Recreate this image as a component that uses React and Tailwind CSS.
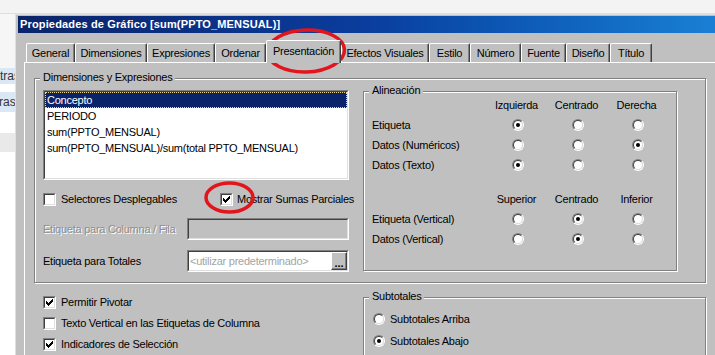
import React from "react";

const tabs = [
  { label: "General", w: "w-[49px]" },
  { label: "Dimensiones", w: "w-[72px]" },
  { label: "Expresiones", w: "w-[68px]" },
  { label: "Ordenar", w: "w-[51px]" },
  { label: "Presentación", w: "w-[75px]", active: true },
  { label: "Efectos Visuales", w: "w-[88px]" },
  { label: "Estilo", w: "w-[41px]" },
  { label: "Número", w: "w-[51px]" },
  { label: "Fuente", w: "w-[45px]" },
  { label: "Diseño", w: "w-[44px]" },
  { label: "Título", w: "w-[42px]" },
];

function Check({ checked }) {
  return (
    <span className="inline-block w-[13px] h-[13px] shrink-0 border border-t-[#808080] border-l-[#808080] border-b-white border-r-white">
      <span className="block w-full h-full border border-t-[#404040] border-l-[#404040] border-b-[#dfdfdf] border-r-[#dfdfdf] bg-white">
        {checked && (
          <svg width="9" height="9" viewBox="0 0 9 9" className="block" shapeRendering="crispEdges">
            <path
              d="M1 3h1v3H1z M2 4h1v3H2z M3 5h1v3H3z M4 4h1v3H4z M5 3h1v3H5z M6 2h1v3H6z M7 1h1v3H7z"
              fill="#000"
            />
          </svg>
        )}
      </span>
    </span>
  );
}

function Radio({ on }) {
  return (
    <span className="inline-flex w-[12px] h-[12px] shrink-0 rounded-full border border-t-[#808080] border-l-[#808080] border-b-white border-r-white">
      <span className="flex items-center justify-center w-full h-full rounded-full border border-t-[#404040] border-l-[#404040] border-b-[#dfdfdf] border-r-[#dfdfdf] bg-white">
        {on && <span className="block w-[4px] h-[4px] rounded-full bg-black" />}
      </span>
    </span>
  );
}

function Sunken({ className, children }) {
  return (
    <div className={"border border-t-[#808080] border-l-[#808080] border-b-white border-r-white " + className}>
      <div className="w-full h-full border border-t-[#404040] border-l-[#404040] border-b-[#dfdfdf] border-r-[#dfdfdf] bg-inherit">
        {children}
      </div>
    </div>
  );
}

function Group({ label, className, children }) {
  return (
    <div className={"relative border border-[#808080] shadow-[inset_1px_1px_0_#fff,1px_1px_0_#fff] " + className}>
      <span className="absolute left-[5px] top-[-8px] px-[3px] bg-[#c0c0c0] leading-[13px]">{label}</span>
      {children}
    </div>
  );
}

function RadioCell({ on }) {
  return (
    <div className="flex justify-center items-center">
      <Radio on={on} />
    </div>
  );
}

export default function App() {
  return (
    <div className="relative w-[715px] h-[355px] overflow-hidden bg-[#f4f4f4] flex flex-col font-['Liberation_Sans',Arial,sans-serif] text-[11px] tracking-[-0.25px] text-black">
      <div className="h-[14px] shrink-0 border-b border-[#dedede] bg-[#f3f3f3]" />
      <div className="flex flex-1 min-h-0">
        {/* left strip of the window behind */}
        <div className="w-[15px] shrink-0 overflow-hidden flex flex-col text-[12px] tracking-normal text-[#333] bg-white">
          <div className="h-[54px] bg-[#f6f6f6]" />
          <div className="h-[16px] bg-[#dbe7f4] leading-[16px] whitespace-nowrap">tras</div>
          <div className="h-[8px] bg-white" />
          <div className="h-[20px] bg-[#dbe7f4] leading-[20px] whitespace-nowrap -ml-[1px]">ras</div>
          <div className="h-[21px] bg-white" />
          <div className="h-[19px] bg-[#e9e9e9]" />
        </div>

        {/* dialog */}
        <div className="flex-1 min-w-0 flex flex-col bg-[#c0c0c0] border-l border-t border-[#dfdfdf] pl-[2px] pt-[1px]">
          <div className="h-[17px] shrink-0 bg-linear-to-r from-[#0a246a] via-[#0a3d9e] to-[#1a7fd4] pl-[2px] flex items-center">
            <span className="text-white font-bold text-[11px] tracking-[0.15px] leading-[17px] whitespace-nowrap">
              Propiedades de Gráfico [sum(PPTO_MENSUAL)]
            </span>
          </div>

          {/* tabs */}
          <div className="h-[29px] shrink-0 flex items-end pl-[8px]">
            {tabs.map((t) =>
              t.active ? (
                <div
                  key={t.label}
                  className={
                    t.w +
                    " shrink-0 relative z-10 h-[23px] -mb-px pb-[1px] bg-[#c0c0c0] flex items-center justify-center border-l border-t border-white border-r border-r-[#404040] shadow-[inset_-1px_0_0_#808080] rounded-t-[2px] whitespace-nowrap"
                  }
                >
                  {t.label}
                </div>
              ) : (
                <div
                  key={t.label}
                  className={
                    t.w +
                    " shrink-0 h-[19px] flex items-center justify-center border-l border-t border-white border-r border-r-[#404040] shadow-[inset_-1px_0_0_#808080] rounded-t-[2px] whitespace-nowrap"
                  }
                >
                  {t.label}
                </div>
              )
            )}
          </div>

          {/* panel */}
          <div className="ml-[6px] flex-1 border-l border-t border-white pl-[9px] pt-[15px] flex flex-col">
            <Group label="Dimensiones y Expresiones" className="w-[672px] h-[205px] shrink-0">
              <div className="flex items-start pl-[8px] pt-[11px]">
                {/* left column */}
                <div className="w-[306px] shrink-0 flex flex-col">
                  <Sunken className="h-[90px] bg-white">
                    <div className="flex flex-col">
                      <div className="h-[16px] bg-[#0a246a] text-white pl-[2px] leading-[16px] outline outline-1 outline-dotted outline-[#f0d890] -outline-offset-1">
                        Concepto
                      </div>
                      <div className="h-[16px] pl-[2px] leading-[16px]">PERIODO</div>
                      <div className="h-[16px] pl-[2px] leading-[16px]">sum(PPTO_MENSUAL)</div>
                      <div className="h-[16px] pl-[2px] leading-[16px] whitespace-nowrap">
                        sum(PPTO_MENSUAL)/sum(total PPTO_MENSUAL)
                      </div>
                    </div>
                  </Sunken>

                  <div className="mt-[9px] h-[20px] flex items-center">
                    <div className="w-[177px] shrink-0 flex items-center">
                      <Check />
                      <span className="ml-[5px] leading-[13px] whitespace-nowrap">Selectores Desplegables</span>
                    </div>
                    <div className="shrink-0 flex items-center">
                      <Check checked />
                      <span className="ml-[4px] leading-[13px] whitespace-nowrap">Mostrar Sumas Parciales</span>
                    </div>
                  </div>

                  <div className="mt-[9px] h-[22px] flex items-center">
                    <span className="flex-1 text-[#8e8e8e] [text-shadow:1px_1px_0_#fff] leading-[13px]">
                      Etiqueta para Columna / Fila
                    </span>
                    <Sunken className="w-[162px] h-[22px] bg-[#c0c0c0]" />
                  </div>

                  <div className="mt-[10px] h-[22px] flex items-center">
                    <span className="flex-1 leading-[13px]">Etiqueta para Totales</span>
                    <Sunken className="w-[162px] h-[22px] bg-white">
                      <div className="flex h-full items-center">
                        <span className="flex-1 pl-[1px] text-[#a4a4a4] whitespace-nowrap overflow-hidden leading-[13px]">
                          &lt;utilizar predeterminado&gt;
                        </span>
                        <div className="w-[16px] h-[18px] flex items-end justify-center bg-[#c0c0c0] border border-t-white border-l-white border-b-[#404040] border-r-[#404040] shadow-[inset_-1px_-1px_0_#808080] font-bold leading-[12px] tracking-normal">
                          ...
                        </div>
                      </div>
                    </Sunken>
                  </div>
                </div>

                {/* right column: Alineación */}
                <Group label="Alineación" className="ml-[14px] mt-[1px] w-[314px] h-[180px] shrink-0">
                  <div className="pl-[8px] pt-[3px]">
                    <div className="grid grid-cols-[116px_60px_60px_60px] auto-rows-[20px] items-center">
                      <div />
                      <div className="text-center pr-[3px]">Izquierda</div>
                      <div className="text-center pr-[3px]">Centrado</div>
                      <div className="text-center pr-[3px]">Derecha</div>

                      <div>Etiqueta</div>
                      <RadioCell on />
                      <RadioCell />
                      <RadioCell />

                      <div>Datos (Numéricos)</div>
                      <RadioCell />
                      <RadioCell />
                      <RadioCell on />

                      <div>Datos (Texto)</div>
                      <RadioCell on />
                      <RadioCell />
                      <RadioCell />
                    </div>

                    <div className="mt-[14px] grid grid-cols-[116px_60px_60px_60px] auto-rows-[20px] items-center">
                      <div />
                      <div className="text-center pr-[3px]">Superior</div>
                      <div className="text-center pr-[3px]">Centrado</div>
                      <div className="text-center pr-[3px]">Inferior</div>

                      <div>Etiqueta (Vertical)</div>
                      <RadioCell />
                      <RadioCell on />
                      <RadioCell />

                      <div>Datos (Vertical)</div>
                      <RadioCell />
                      <RadioCell on />
                      <RadioCell />
                    </div>
                  </div>
                </Group>
              </div>
            </Group>

            {/* bottom area */}
            <div className="flex items-start">
              <div className="ml-[9px] mt-[9px] w-[306px] shrink-0 flex flex-col">
                <div className="h-[21px] flex items-center">
                  <Check checked />
                  <span className="ml-[5px] leading-[13px]">Permitir Pivotar</span>
                </div>
                <div className="h-[21px] flex items-center">
                  <Check />
                  <span className="ml-[5px] leading-[13px]">Texto Vertical en las Etiquetas de Columna</span>
                </div>
                <div className="h-[21px] flex items-center">
                  <Check checked />
                  <span className="ml-[5px] leading-[13px]">Indicadores de Selección</span>
                </div>
              </div>

              <Group label="Subtotales" className="ml-[14px] mt-[14px] w-[343px] h-[80px] shrink-0">
                <div className="pl-[9px] pt-[10px] flex flex-col">
                  <div className="h-[22px] flex items-center">
                    <Radio />
                    <span className="ml-[5px] leading-[13px]">Subtotales Arriba</span>
                  </div>
                  <div className="h-[22px] flex items-center">
                    <Radio on />
                    <span className="ml-[5px] leading-[13px]">Subtotales Abajo</span>
                  </div>
                </div>
              </Group>
            </div>
          </div>
        </div>
      </div>

      {/* red annotation circles */}
      <svg className="absolute left-[264px] top-[27px] pointer-events-none" width="84" height="48" viewBox="0 0 84 48">
        <ellipse cx="42" cy="24" rx="38.5" ry="21" fill="none" stroke="#e3141c" strokeWidth="3.5" transform="rotate(-2 42 24)" />
      </svg>
      <svg className="absolute left-[203px] top-[180px] pointer-events-none" width="54" height="36" viewBox="0 0 54 36">
        <ellipse cx="26.5" cy="17.5" rx="23.5" ry="14.5" fill="none" stroke="#e3141c" strokeWidth="3.5" />
      </svg>
    </div>
  );
}
